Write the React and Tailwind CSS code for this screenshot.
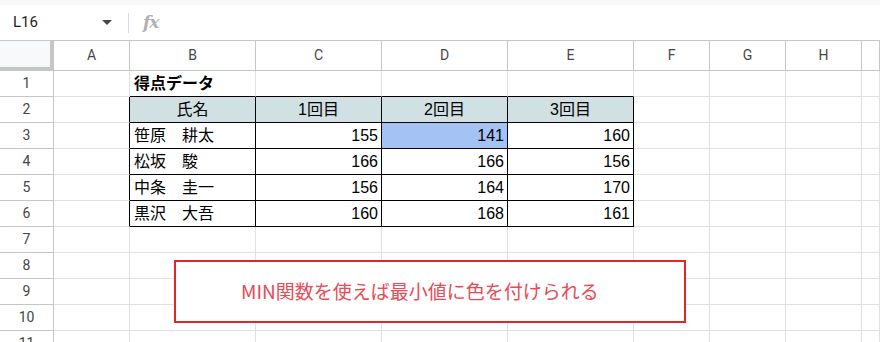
import React from 'react';

const COLS = ['A', 'B', 'C', 'D', 'E', 'F', 'G', 'H', ''];
const ROWS = [1, 2, 3, 4, 5, 6, 7, 8, 9, 10, 11];

// cell contents keyed by "row-col index"
const cells = {
  '1-1': { text: '得点データ', bold: true },
  '2-1': { text: '氏名', head: true },
  '2-2': { text: '1回目', head: true },
  '2-3': { text: '2回目', head: true },
  '2-4': { text: '3回目', head: true },
  '3-1': { text: '笹原　耕太' },
  '3-2': { text: '155', num: true },
  '3-3': { text: '141', num: true, hit: true },
  '3-4': { text: '160', num: true },
  '4-1': { text: '松坂　駿' },
  '4-2': { text: '166', num: true },
  '4-3': { text: '166', num: true },
  '4-4': { text: '156', num: true },
  '5-1': { text: '中条　圭一' },
  '5-2': { text: '156', num: true },
  '5-3': { text: '164', num: true },
  '5-4': { text: '170', num: true },
  '6-1': { text: '黒沢　大吾' },
  '6-2': { text: '160', num: true },
  '6-3': { text: '168', num: true },
  '6-4': { text: '161', num: true },
};

function Cell({ r, c }) {
  const inTable = r >= 2 && r <= 6 && c >= 1 && c <= 4;
  const right = inTable || (c === 0 && r >= 2 && r <= 6) ? 'border-r-black' : 'border-r-[#e1e1e1]';
  const bottom = inTable || (r === 1 && c >= 1 && c <= 4) ? 'border-b-black' : 'border-b-[#e1e1e1]';
  const d = cells[`${r}-${c}`];
  let bg = 'bg-white';
  if (d?.head) bg = 'bg-[#d0e0e3]';
  if (d?.hit) bg = 'bg-[#a4c2f4]';
  let align = 'justify-start pl-[4px]';
  if (d?.head) align = 'justify-center';
  if (d?.num) align = 'justify-end pr-[3px]';
  return (
    <div className={`h-[26px] border-r border-b ${right} ${bottom} ${bg} ${align} flex items-center overflow-visible whitespace-nowrap text-[16px] text-black ${d?.bold ? 'font-bold' : ''}`}>
      {d?.text}
    </div>
  );
}

export default function App() {
  return (
    <div className="relative w-[880px] h-[342px] overflow-hidden bg-white font-['Liberation_Sans','Noto_Sans_CJK_JP',sans-serif]">
      {/* formula bar */}
      <div className="h-[5px] bg-[#f8f9fa]" />
      <div className="h-[36px] flex items-center border-b border-[#c4c7c5]">
        <div className="w-[128px] flex items-center justify-between pl-[13px] pr-[16px]">
          <span className="font-['Roboto',sans-serif] text-[15px] text-[#1f1f1f]">L16</span>
          <svg width="10" height="6" viewBox="0 0 10 6">
            <path d="M0 0 L10 0 L5 5 Z" fill="#444746" />
          </svg>
        </div>
        <div className="w-px h-[20px] bg-[#d9d9d9]" />
        <span className="ml-[14px] font-['DejaVu_Serif',serif] italic font-bold text-[17px] text-[#b0b0b0] tracking-[-1px]">fx</span>
      </div>

      {/* sheet grid */}
      <div className="grid grid-cols-[54px_76px_126px_126px_126px_126px_76px_76px_76px_1fr]">
        <div className="h-[30px] bg-[#f8f9fa] border-r-4 border-b-4 border-[#c4c7c5]" />
        {COLS.map((c, i) => (
          <div key={i} className="h-[30px] flex items-center justify-center border-r border-b border-[#c4c7c5] font-['Roboto',sans-serif] text-[14px] text-[#444746]">
            {c}
          </div>
        ))}
        {ROWS.map((r) => (
          <React.Fragment key={r}>
            <div className="h-[26px] flex items-center justify-center border-r border-b border-[#c4c7c5] font-['Roboto',sans-serif] text-[14px] text-[#444746]">
              {r}
            </div>
            {COLS.map((_, c) => (
              <Cell key={c} r={r} c={c} />
            ))}
          </React.Fragment>
        ))}
      </div>

      {/* floating text box */}
      <div className="absolute left-[174px] top-[260px] w-[512px] h-[63px] border-2 border-[#e8222b] bg-white flex items-center pl-[65px]">
        <span className="font-['Noto_Sans_CJK_JP',sans-serif] text-[19px] text-[#ea4a56] whitespace-nowrap">MIN関数を使えば最小値に色を付けられる</span>
      </div>
    </div>
  );
}
